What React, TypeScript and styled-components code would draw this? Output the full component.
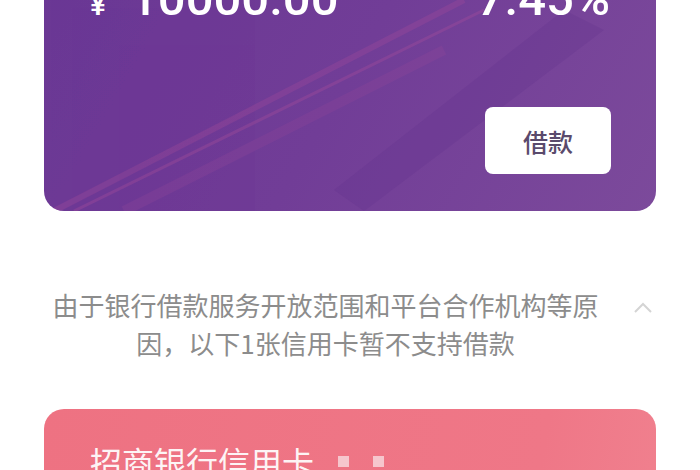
import React from "react";
import styled, { createGlobalStyle } from "styled-components";

const GlobalStyle = createGlobalStyle`
  html, body {
    margin: 0;
    padding: 0;
    background: #ffffff;
    overflow: hidden;
  }
  body {
    font-family: Roboto, "Noto Sans CJK SC", "Noto Sans", sans-serif;
  }
`;

const Page = styled.div`
  width: 700px;
  height: 470px;
  padding: 0 44px;
  box-sizing: border-box;
  overflow: hidden;
`;

const LoanCard = styled.div`
  position: relative;
  height: 271px;
  margin-top: -60px;
  padding: 35px 46px 37px 46px;
  box-sizing: border-box;
  border-radius: 20px;
  background: linear-gradient(120deg, #6a3794 0%, #713d97 50%, #7c4a9b 100%);
  display: flex;
  flex-direction: column;
  overflow: hidden;
`;

const Decor = styled.svg`
  position: absolute;
  left: 0;
  top: 0;
  width: 100%;
  height: 100%;
  pointer-events: none;
`;

const TopRow = styled.div`
  position: relative;
  display: flex;
  justify-content: space-between;
  align-items: baseline;
  color: #ffffff;
  font-family: Roboto, "Noto Sans", sans-serif;
  font-size: 49px;
  line-height: 48px;
  font-weight: 500;
`;

const Currency = styled.span`
  font-size: 30px;
  margin-right: 24px;
`;

const ButtonRow = styled.div`
  position: relative;
  margin-top: auto;
  display: flex;
  justify-content: flex-end;
`;

const LoanButton = styled.button`
  width: 126px;
  height: 67px;
  border: none;
  border-radius: 8px;
  background: #ffffff;
  color: #5a4a6c;
  font-family: "Noto Sans CJK SC", sans-serif;
  font-size: 25px;
  font-weight: 500;
  padding: 0;
  margin-right: -1px;
`;

const NoteRow = styled.div`
  display: flex;
  align-items: flex-start;
  margin-top: 75px;
`;

const NoteText = styled.p`
  width: 563px;
  margin: 0;
  text-align: center;
  color: #8c8c8c;
  font-family: "Noto Sans CJK SC", sans-serif;
  font-size: 26px;
  line-height: 38px;
`;

const Chevron = styled.svg`
  width: 20px;
  height: 12px;
  margin: 16px 0 0 26px;
`;

const BankCard = styled.div`
  margin-top: 47px;
  height: 120px;
  border-radius: 20px;
  background: linear-gradient(100deg, #ee7282 0%, #ef7787 80%, #f0808e 100%);
  padding: 31px 46px 0;
  box-sizing: border-box;
  display: flex;
  align-items: flex-start;
`;

const BankName = styled.span`
  color: #ffffff;
  font-family: "Noto Sans CJK SC", sans-serif;
  font-size: 32px;
  line-height: 42px;
  opacity: 0.92;
`;

const Dot = styled.span<{ gap: number }>`
  width: 11px;
  height: 11px;
  background: #f6c6cd;
  margin-top: 16px;
  margin-left: ${(p) => p.gap}px;
`;

export default function App() {
  return (
    <>
      <GlobalStyle />
      <Page>
        <LoanCard>
          <Decor viewBox="0 0 612 271" preserveAspectRatio="none">
            <polygon points="290,250 520,70 560,90 320,271" fill="#5e2f8a" opacity="0.25" />
            <line x1="10" y1="271" x2="420" y2="60" stroke="#a04a9a" strokeWidth="6" opacity="0.35" />
            <line x1="30" y1="271" x2="440" y2="70" stroke="#b0509c" strokeWidth="3" opacity="0.3" />
            <line x1="80" y1="271" x2="400" y2="110" stroke="#a04a9a" strokeWidth="10" opacity="0.2" />
          </Decor>
          <TopRow>
            <span>
              <Currency>¥</Currency>10000.00
            </span>
            <span>7.45%</span>
          </TopRow>
          <ButtonRow>
            <LoanButton>借款</LoanButton>
          </ButtonRow>
        </LoanCard>

        <NoteRow>
          <NoteText>
            由于银行借款服务开放范围和平台合作机构等原因，以下1张信用卡暂不支持借款
          </NoteText>
          <Chevron viewBox="0 0 20 12">
            <polyline points="2,10 10,2 18,10" fill="none" stroke="#d4d4d4" strokeWidth="2" />
          </Chevron>
        </NoteRow>

        <BankCard>
          <BankName>招商银行信用卡</BankName>
          <Dot gap={24} />
          <Dot gap={24} />
        </BankCard>
      </Page>
    </>
  );
}
